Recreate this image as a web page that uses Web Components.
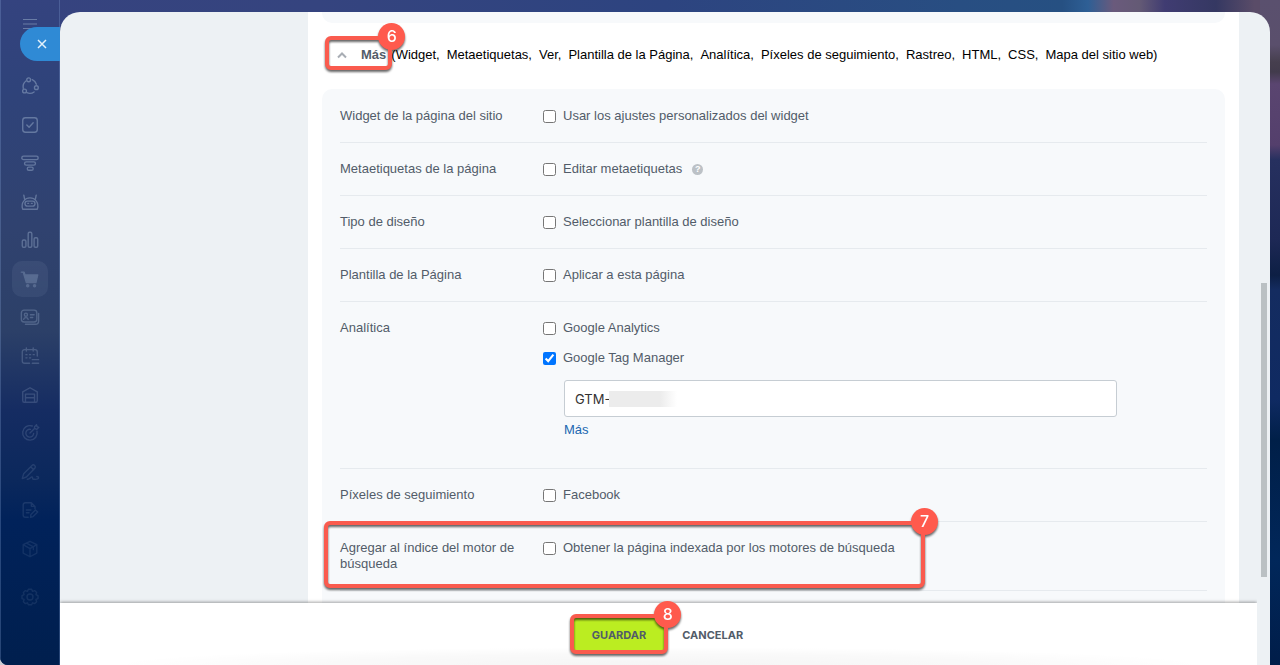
<!DOCTYPE html>
<html lang="es">
<head>
<meta charset="utf-8">
<title>Ajustes de la página</title>
<style>
  body { margin: 0; font: 13px/16px "Liberation Sans", Arial, sans-serif; color: #525c69; background: #c9ccd4; }
</style>
</head>
<body>
<page-shell>
  <side-nav slot="nav"></side-nav>
  <slide-panel>
    <settings-card end></settings-card>
    <more-heading></more-heading>
    <settings-card>
      <settings-row label="Widget de la página del sitio"><check-option label="Usar los ajustes personalizados del widget"></check-option></settings-row>
      <settings-row label="Metaetiquetas de la página"><check-option label="Editar metaetiquetas"><help-dot></help-dot></check-option></settings-row>
      <settings-row label="Tipo de diseño"><check-option label="Seleccionar plantilla de diseño"></check-option></settings-row>
      <settings-row label="Plantilla de la Página"><check-option label="Aplicar a esta página"></check-option></settings-row>
      <settings-row label="Analítica">
        <check-option label="Google Analytics"></check-option>
        <check-option label="Google Tag Manager" checked></check-option>
        <tag-field></tag-field>
      </settings-row>
      <settings-row label="Píxeles de seguimiento"><check-option label="Facebook"></check-option></settings-row>
      <settings-row label="Agregar al índice del motor de búsqueda">
        <check-option label="Obtener la página indexada por los motores de búsqueda"></check-option>
        <step-mark slot="mark" n="7"></step-mark>
      </settings-row>
    </settings-card>
    <action-bar slot="footer"></action-bar>
  </slide-panel>
</page-shell>

<script>
function define(name, html, setup) {
  const tpl = document.createElement('template');
  tpl.innerHTML = html;
  customElements.define(name, class extends HTMLElement {
    constructor() {
      super();
      this.attachShadow({ mode: 'open' }).appendChild(tpl.content.cloneNode(true));
    }
    connectedCallback() { if (setup) setup(this, this.shadowRoot); }
  });
}

define('page-shell', `
<style>
  :host { display: grid; grid-template-columns: 60px minmax(0, 1fr); height: 100vh; overflow: hidden; border-bottom-left-radius: 8px;
    background:
      linear-gradient(180deg, #5a506e 0, #5a4f6c 45px, #463f4e 62px, #423b4c 72px, #5a4570 84px, #543f6c 145px, #26305f 160px, #1d2855 240px, #0d1f44 275px, #142c60 290px, #0f2a62 400px, #001f48 440px, #01275a 560px, #001d49 100%) right top / 20px 100% no-repeat,
      linear-gradient(90deg, #36437f 0, #35447f 25%, #2d4480 52%, #284e82 75%, #265082 83%, #2e5f95 85%, #6a5a7c 87%, #645a75 89%, #403c72 91%, #353862 95%, #5a4c68 98%) left top / 100% 40px no-repeat,
      #001f4e; }
</style>
<slot name="nav"></slot><slot></slot>`);

const icons = [
  ['CRM compartido', '<path d="M6.500 5.500A8 8 0 0 0 3.600 13.500M7.500 18.300A8 8 0 0 0 15.500 17.600M13.500 4A8 8 0 0 1 18 9"/><circle cx="9.500" cy="4.200" r="2.100"/><circle cx="18" cy="12.800" r="2.100"/><circle cx="5" cy="16.500" r="2.100"/>'],
  ['Tareas', '<rect x="3" y="3" width="16" height="16" rx="3"/><path d="M7.500 11l2.500 2.500 4.500-5"/>'],
  ['Embudo', '<rect x="2" y="3.500" width="18" height="3.800" rx="1.900"/><rect x="5" y="9.700" width="12" height="3.600" rx="1.800"/><rect x="8" y="15.500" width="6.500" height="3.500" rx="1.700"/>'],
  ['Robots', '<path d="M5 7.500 4.200 3.500M17 7.500l.8-4M3 19c-1-3-.8-7 1.500-9.500C6 7.500 8 6.500 11 6.500s5 1 6.500 3c2.300 2.500 2.500 6.500 1.500 9.500z"/><rect x="5.500" y="10" width="11" height="5.500" rx="2.700"/><path d="M8.500 12.500h1M12.500 12.500h1"/>'],
  ['Informes', '<rect x="2.500" y="11" width="4" height="8" rx="1.500"/><rect x="9" y="2.500" width="4" height="16.500" rx="1.500"/><rect x="15.500" y="8.500" width="4" height="10.500" rx="1.500"/>'],
  ['Tienda', '<path d="M1.500 3.500h3l1 3h14l-2 8.500H7L4 5" fill="currentColor"/><circle cx="8.500" cy="18.500" r="1.200" fill="currentColor"/><circle cx="16" cy="18.500" r="1.200" fill="currentColor"/>'],
  ['Contactos', '<rect x="1.500" y="3.500" width="17" height="13" rx="3"/><circle cx="6.500" cy="8.500" r="1.700"/><path d="M4 13.500c.5-2.500 4.500-2.500 5 0M11.500 8.500h4M11.500 11.500h2.500M20.500 7v8c0 2.500-1.500 4-3.500 4H6"/>'],
  ['Calendario', '<path d="M10.500 19H5a2.500 2.500 0 0 1-2.500-2.500V6.500A2.500 2.500 0 0 1 5 4h11.500A2.500 2.500 0 0 1 19 6.500V11M7 2v3.500M14.500 2v3.500M13.500 15h7M13.500 19h7M6.500 9.500h1.200M10.500 9.500h1.200M14.500 9.500h1.200M6.500 13h1.200M10.500 13h1.200"/>'],
  ['Almacén', '<path d="M3 17V7.500L11 3l8 4.500V17c0 1.500-.5 2-1.500 2h-13C3.500 19 3 18.500 3 17zM6 19V10h10v9M6 14h10"/>'],
  ['Marketing', '<path d="M13.500 3.300A8 8 0 1 0 18.700 9M11.500 7A4.300 4.300 0 1 0 15 11.500M11 11l5-5M16 6V4l2.200-2 .5 2 2 .7L18.500 7z"/>'],
  ['Firma', '<path d="M4 13 13.500 3.500c1.500-1.300 4.500 1 3 3L7 16.500l-4.500 1.700zM12 5.500l3 3M8 19c3 .5 4-3.500 5.500-2.500 1 .8-.5 2.500 1.500 2.500 2 0 5 .5 5.500-1.500 0-1-1-1.500-2-1.500"/>'],
  ['Documentos', '<path d="M9 19H6a2.500 2.500 0 0 1-2.500-2.500v-11A2.500 2.500 0 0 1 6 3h6.500l4 4v2.500M12.500 3v4h4M7 11h5M7 14h3M11.500 19l.5-3 5-5 2.500 2.200-5 5z"/>'],
  ['Paquetes', '<path d="M11 2.500l7.500 3.700v9.300L11 19.500l-7.500-4V6.200zM3.500 6.200 11 10.500l7.500-4.300M11 10.500v9M7.200 4.500l7.500 4.200v3"/>']
];
const svg = d => '<svg viewBox="0 0 22 22" width="20" height="20" fill="none" stroke="currentColor" stroke-width="1.5" stroke-linecap="round" stroke-linejoin="round" aria-hidden="true">' + d + '</svg>';
const gear = '<circle cx="11" cy="11" r="3.300"/><path d="M9.200 2.500h3.600l1 2.300 2.500-.8 2 2-.8 2.500 2.300 1v3.200l-2.300 1 .8 2.500-2 2-2.500-.8-1 2.100H9.200l-1-2.100-2.500.8-2-2 .8-2.500-2.300-1V9.500l2.300-1L3.700 6l2-2 2.500.8z"/>';

define('side-nav', `
<style>
  :host { display: block; min-height: 0; box-sizing: border-box; border: 0 solid rgba(130,160,210,.3); border-width: 0 1px;
    background: linear-gradient(180deg, #34437f 0, #2f437a 90px, #30426f 230px, #2c4068 330px, #152c62 410px, #0b285c 480px, #01225a 520px, #001f4e 100%); }
  nav { height: 100%; box-sizing: border-box; display: flex; flex-direction: column; align-items: center; gap: 12px; padding: 17px 0 50px; color: #8fa3c2;
    -webkit-mask-image: linear-gradient(#0009 0, #0008 200px, #0005 350px, #0003 450px, #0002 550px, #0002 100%); mask-image: linear-gradient(#0009 0, #0008 200px, #0005 350px, #0003 450px, #0002 550px, #0002 100%); }
  ul { list-style: none; margin: 0; padding: 0; flex: 1; display: flex; flex-direction: column; justify-content: space-between; }
  button { width: 36px; height: 36px; padding: 0; border: 0; border-radius: 10px; background: none; color: inherit; display: grid; place-items: center; }
  .menu { height: 16px; margin-bottom: 23px; place-items: start center; }
  .on { background: rgba(190,205,230,.18); }
</style>
<nav aria-label="Principal">
  <button class="menu" aria-label="Menú"><svg width="14" height="12" stroke="currentColor" stroke-width="1" aria-hidden="true"><path d="M0 2.500h14M0 7h14M0 11.500h14"/></svg></button>
  <ul>${icons.map(([n, d], i) => `<li><button aria-label="${n}"${i === 5 ? ' class="on"' : ''}>${svg(d)}</button></li>`).join('')}</ul>
  <button aria-label="Ajustes">${svg(gear)}</button>
</nav>`);

define('slide-panel', `
<style>
  :host { display: grid; grid-template-rows: minmax(0, 1fr) auto; position: relative; min-height: 0; margin: 12px 10px 0 0; background: #edf1f4; border-radius: 20px 20px 0 0; }
  .view { overflow: hidden; border-radius: 20px 20px 0 0; }
  main { min-height: 100%; margin: 0 31px 0 248px; padding: 0 14px; background: #fff; display: flex; flex-direction: column; box-sizing: border-box; }
  .close { position: absolute; left: -40px; top: 15px; width: 40px; height: 34px; border: 0; padding: 0 0 0 4px; border-radius: 17px 0 0 17px; background: #2f8ad5; display: grid; place-items: center; }
  .thumb { position: absolute; right: 3px; top: 271px; bottom: 88px; width: 6px; background: #bac0c3; }
</style>
<button class="close" aria-label="Cerrar"><svg width="10" height="10" stroke="#e3f1fb" stroke-width="1.500" aria-hidden="true"><path d="M1 1l8 8M9 1 1 9"/></svg></button>
<div class="view"><main><slot></slot></main></div>
<slot name="footer"></slot>
<div class="thumb"></div>`);

define('settings-card', `
<style>
  :host { display: block; padding: 1px 18px 30px; background: #f7f9fb; border-radius: 10px; }
  :host([end]) { height: 11px; padding: 0; border-radius: 0 0 10px 10px; }
</style><slot></slot>`);

define('settings-row', `
<style>
  :host { display: grid; grid-template-columns: 188px minmax(0, 1fr); column-gap: 15px; padding: 18px 0; border-bottom: 1px solid #e6eaee; position: relative; }
  .options { display: grid; row-gap: 14px; }
</style>
<div class="name"></div><div class="options"><slot></slot></div><slot name="mark"></slot>`,
(el, root) => { root.querySelector('.name').textContent = el.getAttribute('label'); });

define('check-option', `
<style>
  :host { display: flex; align-items: center; height: 16px; }
  input { width: 13px; height: 13px; margin: 0 7px 0 0; accent-color: #0075ff; }
</style>
<input type="checkbox" id="c"><label for="c"></label><slot></slot>`,
(el, root) => {
  root.querySelector('label').textContent = el.getAttribute('label');
  root.querySelector('input').checked = el.hasAttribute('checked');
});

define('help-dot', `
<style>
  :host { display: grid; place-items: center; margin-left: 10px; width: 11px; height: 11px; border-radius: 50%; background: #bcc1c6; color: #fff; font-size: 9px; line-height: 11px; font-weight: 700; }
</style>?`);

define('tag-field', `
<style>
  :host { display: block; margin: 0 90px 12px 21px; }
  .box { position: relative; }
  input { display: block; box-sizing: border-box; width: 100%; height: 37px; padding: 0 10px; border: 1px solid #c6cdd3; border-radius: 3px; background: #fff; color: #333; font: 13px/16px Inter, "Liberation Sans", sans-serif; }
  .veil { position: absolute; left: 45px; top: 11px; width: 68px; height: 16px; background: linear-gradient(90deg, #ececec 75%, #fff); }
  a { display: block; width: max-content; margin-top: 5px; color: #2067b0; text-decoration: none; }
</style>
<div class="box"><input type="text" value="GTM-" aria-label="Google Tag Manager"><div class="veil"></div></div>
<a href="#">Más</a>`);

define('step-mark', `
<style>
  :host { position: absolute; inset: -1px 282px 2px -16px; border: 4px solid #fa5b4e; border-radius: 6px; filter: drop-shadow(0 2px 1px rgba(0,0,0,.6)); pointer-events: none; }
  :host([n="6"]) { inset: -11px auto auto -10px; margin-left: -25px; width: 59px; height: 26px; }
  :host([n="8"]) { inset: -2px; }
  span { position: absolute; right: -17px; top: -17px; width: 27px; height: 27px; border-radius: 50%; background: #ff5a4d; color: #fff; font: 500 16px/27px Inter, sans-serif; text-align: center; }
</style><span></span>`,
(el, root) => { root.querySelector('span').textContent = el.getAttribute('n'); });

define('more-heading', `
<style>
  :host { display: flex; align-items: center; height: 64px; padding: 0 0 2px 15px; color: #000; }
  .toggle { display: flex; align-items: center; height: 16px; padding: 0; border: 0; background: none; font: 700 13px/16px "Liberation Sans", Arial, sans-serif; color: #525c69; }
  svg { margin-right: 14px; }
  .mark { position: relative; height: 16px; width: 0; margin-left: -26px; margin-right: 31px; z-index: 1; }
  ul { display: flex; gap: 7px; margin: 0; padding: 0; list-style: none; white-space: nowrap; }
</style>
<button class="toggle" aria-expanded="true"><svg width="10" height="8" fill="none" stroke="#a8adb4" stroke-width="2" aria-hidden="true"><path d="M1 6.500l4-4 4 4"/></svg>Más</button>
<div class="mark"><step-mark n="6"></step-mark></div>
<ul><li>(Widget,</li><li>Metaetiquetas,</li><li>Ver,</li><li>Plantilla de la Página,</li><li>Analítica,</li><li>Píxeles de seguimiento,</li><li>Rastreo,</li><li>HTML,</li><li>CSS,</li><li>Mapa del sitio web)</li></ul>`);

define('action-bar', `
<style>
  :host { display: flex; justify-content: center; align-items: center; gap: 16px; height: 62px; margin-right: 13px; padding-right: 2px; box-sizing: border-box; position: relative; box-shadow: 0 -1px 3px rgba(0,0,0,.35); clip-path: inset(-20px 0 0 0);
    background: radial-gradient(50% 100% at 50% 100%, rgba(0,0,0,.04), rgba(0,0,0,.025) 60%, transparent) center bottom / 92% 18px no-repeat #fff; }
  button { position: relative; height: 36px; padding: 2px 0 0; border: 0; background: none; font: 700 11px/16px Inter, "Liberation Sans", sans-serif; color: #525c69; }
  .save { padding: 2px 20px 0; background: #bbed21; border-radius: 3px; }
</style>
<button class="save">GUARDAR<step-mark n="8"></step-mark></button>
<button>CANCELAR</button>`);
</script>
</body>
</html>
